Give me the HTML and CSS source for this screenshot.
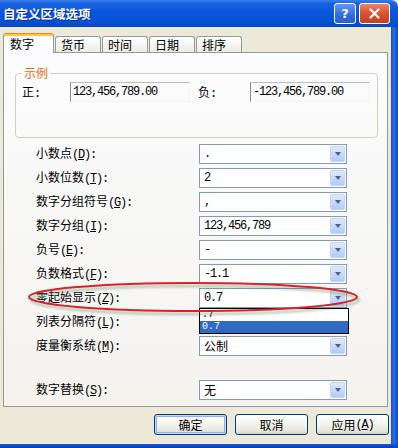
FILE: index.html
```html
<!DOCTYPE html>
<html>
<head>
<meta charset="utf-8">
<title>自定义区域选项</title>
<link rel="stylesheet" href="styles.css">
</head>
<body>
<div class="window">
  <div class="titlebar">
    <span class="title">自定义区域选项</span>
    <div class="tb-buttons">
      <span class="tb-btn help">?</span>
      <span class="tb-btn close"><svg width="11" height="11" viewBox="0 0 11 11"><path d="M1.5 1.5 L9.5 9.5 M9.5 1.5 L1.5 9.5" stroke="#fff" stroke-width="2.2" stroke-linecap="round"/></svg></span>
    </div>
  </div>
  <div class="main">
    <div class="content">
      <div class="tabs">
        <div class="tab active">数字</div>
        <div class="tab">货币</div>
        <div class="tab">时间</div>
        <div class="tab">日期</div>
        <div class="tab">排序</div>
      </div>
      <div class="panel">
        <fieldset class="group">
          <legend>示例</legend>
          <div class="sample-row">
            <span class="s-label">正<span class="lt">:</span></span>
            <span class="s-box lt">123,456,789.00</span>
            <span class="s-label neg">负<span class="lt">:</span></span>
            <span class="s-box lt">-123,456,789.00</span>
          </div>
        </fieldset>
        <div class="rows">
          <div class="row"><span class="label">小数点<span class="lt">(<u>D</u>):</span></span><div class="combo"><span class="val lt">.</span><span class="drop"></span></div></div>
          <div class="row"><span class="label">小数位数<span class="lt">(<u>T</u>):</span></span><div class="combo"><span class="val lt">2</span><span class="drop"></span></div></div>
          <div class="row"><span class="label">数字分组符号<span class="lt">(<u>G</u>):</span></span><div class="combo"><span class="val lt">,</span><span class="drop"></span></div></div>
          <div class="row"><span class="label">数字分组<span class="lt">(<u>I</u>):</span></span><div class="combo"><span class="val lt">123,456,789</span><span class="drop"></span></div></div>
          <div class="row"><span class="label">负号<span class="lt">(<u>E</u>):</span></span><div class="combo"><span class="val lt">-</span><span class="drop"></span></div></div>
          <div class="row"><span class="label">负数格式<span class="lt">(<u>F</u>):</span></span><div class="combo"><span class="val lt">-1.1</span><span class="drop"></span></div></div>
          <div class="row"><span class="label">零起始显示<span class="lt">(<u>Z</u>):</span></span><div class="combo"><span class="val lt">0.7</span><span class="drop"></span>
            <div class="list">
              <div class="opt lt">.7</div>
              <div class="opt sel lt">0.7</div>
            </div>
          </div></div>
          <div class="row"><span class="label">列表分隔符<span class="lt">(<u>L</u>):</span></span><div class="combo"><span class="val lt"></span><span class="drop"></span></div></div>
          <div class="row"><span class="label">度量衡系统<span class="lt">(<u>M</u>):</span></span><div class="combo"><span class="val">公制</span><span class="drop"></span></div></div>
          <div class="row last"><span class="label">数字替换<span class="lt">(<u>S</u>):</span></span><div class="combo"><span class="val">无</span><span class="drop"></span></div></div>
        </div>
      </div>
      <div class="buttons">
        <div class="btn default">确定</div>
        <div class="btn">取消</div>
        <div class="btn">应用<span class="lt">(<u>A</u>)</span></div>
      </div>
    </div>
    <div class="frame-right"></div>
  </div>
  <div class="frame-bottom"></div>
</div>
<svg class="annotation" width="338" height="38" viewBox="0 0 338 38">
  <defs><filter id="blur" x="-5%" y="-30%" width="110%" height="160%"><feGaussianBlur stdDeviation="1.2"/></filter></defs>
  <ellipse cx="168" cy="19" rx="164" ry="14" fill="none" stroke="rgba(70,110,70,0.35)" stroke-width="2.5" filter="url(#blur)"/>
  <ellipse cx="166" cy="16" rx="164" ry="14" fill="none" stroke="#D8232B" stroke-width="2"/>
</svg>
</body>
</html>
```
FILE: styles.css
```css
* { box-sizing: border-box; }
html, body { margin: 0; padding: 0; }
body {
  width: 398px;
  height: 448px;
  overflow: hidden;
  position: relative;
  background: #ECE9D8;
  font-family: "Noto Sans CJK SC", sans-serif;
  font-size: 12px;
  color: #000;
}
.lt {
  font-family: "Liberation Mono", monospace;
  font-size: 12px;
  letter-spacing: -1.2px;
}
.window {
  width: 398px;
  height: 448px;
  display: flex;
  flex-direction: column;
}
.titlebar {
  height: 27px;
  flex: none;
  display: flex;
  align-items: center;
  justify-content: space-between;
  padding: 0 8px 0 3px;
  border-top-right-radius: 7px;
  background: linear-gradient(#3B7FEA 0%, #1C63E3 12%, #0A56DC 40%, #0753D8 75%, #0548C4 100%);
}
.title {
  color: #fff;
  font-weight: bold;
  font-size: 12.5px;
  line-height: 14px;
  text-shadow: 1px 1px 0 #0B2A8C;
}
.tb-buttons { display: flex; gap: 3px; }
.tb-btn {
  height: 21px;
  border: 1px solid #fff;
  border-radius: 3px;
  display: flex;
  align-items: center;
  justify-content: center;
}
.help {
  width: 22px;
  background: linear-gradient(#5E98F5, #2F6AE0 60%, #2A60D4);
  color: #fff;
  font-family: "DejaVu Sans", sans-serif;
  font-weight: bold;
  font-size: 13px;
}
.close {
  width: 31px;
  background: linear-gradient(#E98466, #D8522F 50%, #C64020);
}
.main { flex: 1; display: flex; }
.content {
  width: 391px;
  padding: 6px 3px 0 3px;
  display: flex;
  flex-direction: column;
}
.frame-right {
  width: 7px;
  background: linear-gradient(to right, #0E4CCE, #2B6FE6 40%, #0C45C4);
}
.frame-bottom {
  height: 4px;
  flex: none;
  background: linear-gradient(#1558DA, #0A3FB8);
}
.tabs {
  display: flex;
  align-items: flex-end;
  height: 20px;
  margin-bottom: -1px;
  position: relative;
  z-index: 1;
}
.tab {
  height: 16px;
  margin: 0 0 1px 1px;
  padding: 1px 15px 0 5px;
  border: 1px solid #919B9C;
  border-bottom: none;
  border-radius: 3px 3px 0 0;
  background: linear-gradient(#FFFFFF, #ECEBE6);
  line-height: 14px;
}
.tab.active {
  height: 20px;
  margin: 0;
  padding: 3px 19px 0 6px;
  background: #FCFCFE;
  border-top: 1px solid #E68B2C;
  box-shadow: inset 0 2px 0 #FFC73C;
}
.panel {
  border: 1px solid #919B9C;
  background: linear-gradient(#FCFCFE, #F4F3EE);
  padding: 0 0 6px 0;
}
.group {
  margin: 13px 9px 0 11px;
  padding: 2px 6px 35px 6px;
  border: 1px solid #D0D0BF;
  border-radius: 4px;
  min-width: 0;
}
.group legend {
  padding: 0 2px;
  color: #E46F0F;
  line-height: 14px;
}
.sample-row {
  display: flex;
  align-items: center;
  height: 20px;
}
.s-label { width: 48px; }
.s-label.neg { width: 52px; margin-left: 8px; }
.s-box {
  width: 120px;
  height: 20px;
  line-height: 18px;
  padding-left: 2px;
  border-left: 1px solid #8C8C8C;
  border-top: 1px solid #BDBDBD;
  border-right: 1px solid #F4F4F0;
  border-bottom: 1px solid #F4F4F0;
}
.rows {
  margin-top: 6px;
  padding-left: 32px;
}
.row {
  display: flex;
  align-items: center;
  height: 20px;
  margin-bottom: 4px;
}
.row.last { margin-top: 24px; margin-bottom: 0; }
.label { width: 163px; line-height: 14px; }
.combo {
  position: relative;
  width: 148px;
  height: 20px;
  border: 1px solid #7F9DB9;
  background: #fff;
  display: flex;
  align-items: center;
  padding: 1px;
}
.val { flex: 1; padding-left: 3px; line-height: 14px; }
.drop {
  width: 15px;
  height: 16px;
  border: 1px solid #C3D3FD;
  border-radius: 2px;
  background: linear-gradient(#E0EAFE, #C4D6FB 60%, #B4C9F7);
  display: flex;
  align-items: center;
  justify-content: center;
}
.drop::after {
  content: "";
  border-left: 3.5px solid transparent;
  border-right: 3.5px solid transparent;
  border-top: 4px solid #4D6185;
}
.list {
  position: absolute;
  left: -1px;
  top: calc(100% + 1px);
  width: 150px;
  border: 1px solid #000;
  background: #fff;
  z-index: 2;
}
.opt {
  height: 12px;
  line-height: 12px;
  padding-left: 2px;
  overflow: hidden;
}
.opt.lt { font-size: 10px; letter-spacing: 0; }
.opt.sel { background: #316AC5; color: #fff; }
.buttons {
  display: flex;
  justify-content: flex-end;
  gap: 8px;
  margin-top: 7px;
  margin-right: -1px;
}
.btn {
  width: 73px;
  height: 21px;
  border: 1px solid #003C74;
  border-radius: 3px;
  background: linear-gradient(#FFFFFF 0%, #F4F4F0 45%, #E6E4DA 85%, #D6D0C5 100%);
  display: flex;
  align-items: center;
  justify-content: center;
  line-height: 14px;
}
.btn.default {
  box-shadow: inset 0 0 0 1px #C4D8F8, inset 0 0 0 2px #8FB0EC;
}
.annotation {
  position: absolute;
  left: 27px;
  top: 281px;
  pointer-events: none;
  z-index: 5;
}
```
